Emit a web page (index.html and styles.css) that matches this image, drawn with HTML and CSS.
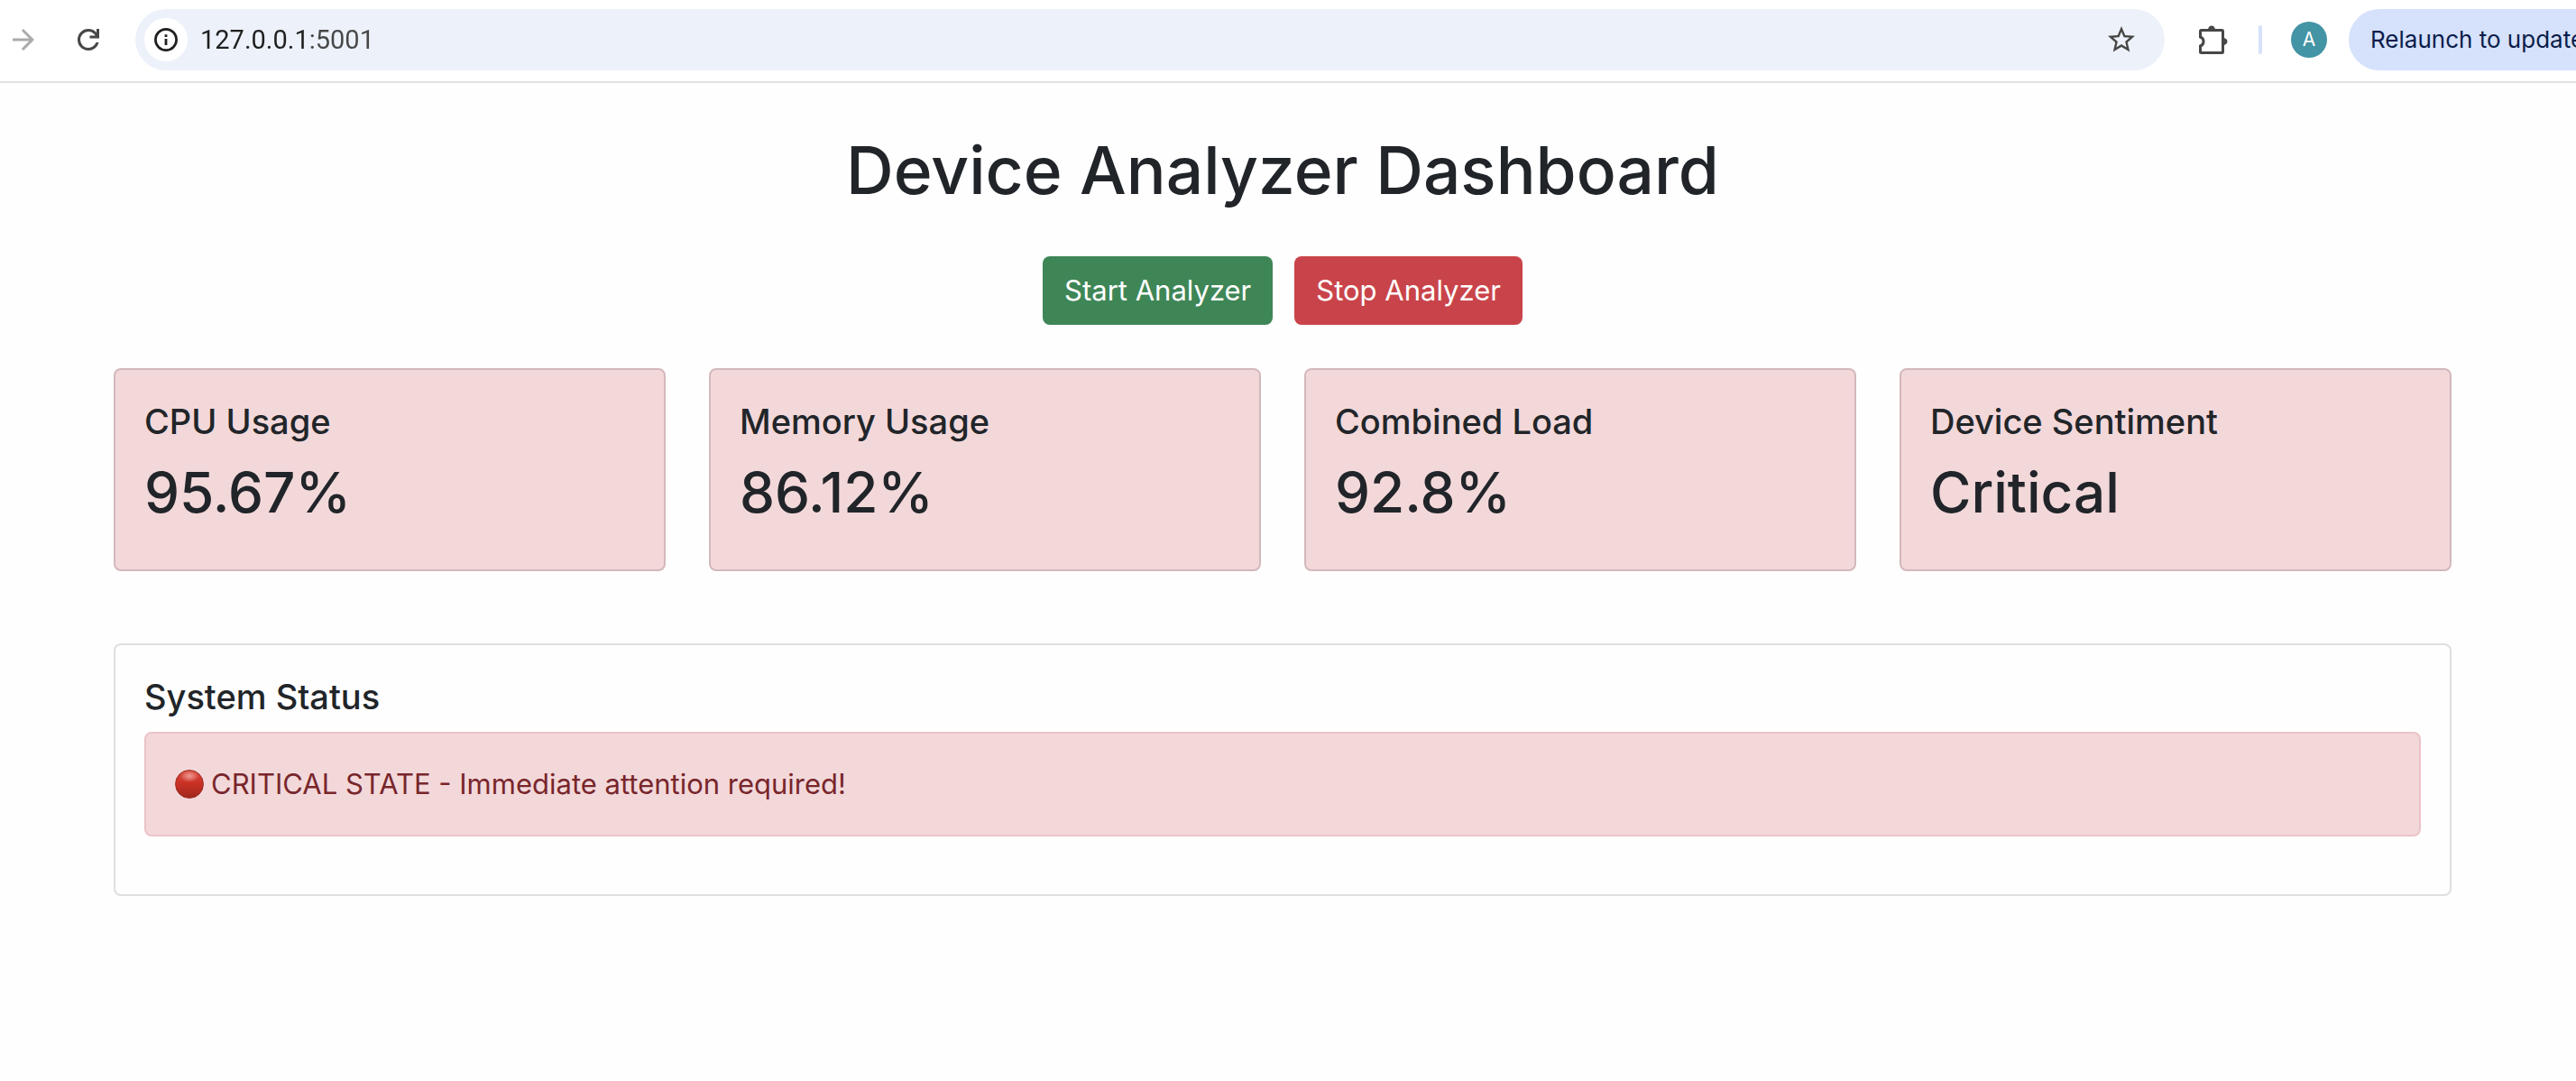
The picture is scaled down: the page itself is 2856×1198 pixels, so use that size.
FILE: index.html
```html
<!DOCTYPE html>
<html lang="en">
<head>
<meta charset="utf-8">
<title>Device Analyzer Dashboard</title>
<link rel="stylesheet" href="styles.css">
</head>
<body>
<header class="toolbar">
  <nav class="nav">
    <button class="icon-button icon-button--disabled" type="button" aria-label="Forward">
      <svg class="icon" viewBox="0 0 24 24"><path d="M12 4l-1.41 1.41L16.17 11H4v2h12.17l-5.58 5.59L12 20l8-8z"/></svg>
    </button>
    <button class="icon-button" type="button" aria-label="Reload">
      <svg class="icon" viewBox="0 -960 960 960"><path d="M480-160q-134 0-227-93t-93-227q0-134 93-227t227-93q69 0 132 28.500T720-690v-110h80v280H520v-80h168q-32-56-87.500-88T480-720q-100 0-170 70t-70 170q0 100 70 170t170 70q77 0 139-44t87-116h84q-28 106-114 173t-196 67Z"/></svg>
    </button>
  </nav>
  <div class="omnibox">
    <button class="site-info" type="button" aria-label="Site information">
      <svg class="site-info-icon" viewBox="0 0 28 28"><circle cx="14" cy="14" r="11.600" fill="none" stroke="currentColor" stroke-width="2.700"/><path d="M12.600 13h2.800v7h-2.800zM12.600 8.200h2.800v2.800h-2.800z"/></svg>
    </button>
    <input class="address" type="text" aria-label="Address" value="127.0.0.1:5001">
    <button class="icon-button" type="button" aria-label="Bookmark">
      <svg class="icon" viewBox="0 0 24 24"><path d="M22 9.240l-7.190-.62L12 2 9.190 8.630 2 9.240l5.460 4.730L5.820 21 12 17.270 18.180 21l-1.630-7.030L22 9.240zM12 15.400l-3.760 2.270 1-4.280-3.320-2.880 4.380-.38L12 6.100l1.710 4.040 4.380.38-3.320 2.880 1 4.280L12 15.400z"/></svg>
    </button>
  </div>
  <div class="actions">
    <button class="icon-button" type="button" aria-label="Extensions">
      <svg class="icon" viewBox="0 0 36 36"><path d="M3.500 8.500q0-1 1-1h23q1 0 1 1v23q0 1-1 1h-23q-1 0-1-1v-6.500a5.300 5.300 0 0 0 0-10z" fill="none" stroke="currentColor" stroke-width="3"/><path d="M12 7a4 4.500 0 0 1 8 0zM29 16a4.500 4 0 0 1 0 8z"/></svg>
    </button>
    <span class="separator"></span>
    <button class="avatar" type="button">A</button>
  </div>
  <button class="relaunch" type="button">Relaunch to update</button>
</header>
<main class="container">
  <h1 class="title">Device Analyzer Dashboard</h1>
  <div class="controls">
    <button class="btn btn--start" type="button">Start Analyzer</button>
    <button class="btn btn--stop" type="button">Stop Analyzer</button>
  </div>
  <section class="metrics">
    <article class="card card--critical"><h2 class="card-title">CPU Usage</h2><p class="value">95.67%</p></article>
    <article class="card card--critical"><h2 class="card-title">Memory Usage</h2><p class="value">86.12%</p></article>
    <article class="card card--critical"><h2 class="card-title">Combined Load</h2><p class="value">92.8%</p></article>
    <article class="card card--critical"><h2 class="card-title">Device Sentiment</h2><p class="value">Critical</p></article>
  </section>
  <section class="card">
    <h2 class="card-title">System Status</h2>
    <div class="alert" role="alert"><span class="status-dot"></span>CRITICAL STATE - Immediate attention required!</div>
  </section>
</main>
</body>
</html>
```
FILE: styles.css
```css
* { box-sizing: border-box; }

body {
  margin: 0;
  background: #fefefe;
  color: #212529;
  font-family: Inter, "Liberation Sans", sans-serif;
  font-size: 31px;
  line-height: 48px;
}

button, input {
  border: 0;
  padding: 0;
  font: inherit;
  color: inherit;
  background: none;
}

h1, h2, p { margin: 0; }

/* Browser toolbar */
.toolbar {
  display: flex;
  align-items: center;
  padding: 10px 0 12px 8px;
  border-bottom: 2px solid #e2e2e2;
  background: #fff;
  color: #474747;
  overflow: hidden;
}

.nav { display: flex; gap: 36px; margin-right: 34px; }

.icon-button { display: block; flex: none; width: 36px; height: 36px; }
.icon-button--disabled { color: #ababab; }
.icon { display: block; width: 36px; height: 36px; fill: currentColor; }

.omnibox {
  display: flex;
  flex: 1;
  align-items: center;
  height: 68px;
  padding: 0 30px 0 10px;
  border-radius: 34px;
  background: #edf2fa;
}

.site-info {
  display: flex;
  flex: none;
  align-items: center;
  justify-content: center;
  width: 48px;
  height: 48px;
  border-radius: 50%;
  background: #fff;
  color: #1f1f1f;
}
.site-info-icon { width: 28px; height: 28px; fill: currentColor; }

/* The host is drawn darker than the port */
.address {
  flex: 1;
  min-width: 0;
  margin-left: 14px;
  font-family: Roboto, Inter, sans-serif;
  font-size: 29px;
  color: transparent;
  background: linear-gradient(to right, #1f1f1f 120px, #474747 120px);
  -webkit-background-clip: text;
  background-clip: text;
}

.actions { display: flex; align-items: center; gap: 32px; margin: 0 24px 0 36px; }
.separator { width: 4px; height: 32px; border-radius: 2px; background: #d6e1fb; }

.avatar {
  width: 40px;
  height: 40px;
  border-radius: 50%;
  background: #4394a5;
  color: #fff;
  font-size: 21px;
  line-height: 40px;
}

.relaunch {
  flex: none;
  width: 320px;
  height: 68px;
  margin-right: -68px;
  padding-left: 24px;
  border-radius: 34px;
  background: #d6e1fb;
  color: #0b1d4b;
  font-size: 26px;
  text-align: left;
  white-space: nowrap;
}

/* Dashboard */
.container { max-width: 2718px; padding: 48px 0 48px 126px; }

.title {
  margin-bottom: 46px;
  font-size: 73px;
  font-weight: 500;
  line-height: 98px;
  text-align: center;
}

.controls { display: flex; justify-content: center; gap: 24px; margin-bottom: 48px; }
.btn { padding: 14px 24px; border-radius: 8px; color: #fff; }
.btn--start { background: #3f8657; }
.btn--stop { background: #c9444a; }

.metrics {
  display: grid;
  grid-template-columns: repeat(4, 1fr);
  gap: 48px;
  margin-bottom: 80px;
}

.card { padding: 32px; border: 2px solid #dfdfdf; border-radius: 8px; background: #fefefe; }
.card--critical { border-color: #d3b8bc; background: #f3d8da; }
.card-title { margin-bottom: 14px; font-size: 38px; font-weight: 500; line-height: 50px; }
.value { margin-bottom: 14px; font-size: 62px; font-weight: 500; line-height: 79px; }

.alert {
  display: flex;
  align-items: center;
  gap: 8px;
  margin-bottom: 32px;
  padding: 32px;
  border: 2px solid #ecc3c8;
  border-radius: 8px;
  background: #f3d8da;
  color: #78262b;
}

.status-dot {
  width: 32px;
  height: 32px;
  border-radius: 50%;
  border: 1px solid #9c2c22;
  background:
    radial-gradient(ellipse 11px 7px at 50% 20%, #ee9c94, rgba(238, 120, 110, 0)),
    linear-gradient(#d8453a, #c93024 50%, #9f271d);
}
```
